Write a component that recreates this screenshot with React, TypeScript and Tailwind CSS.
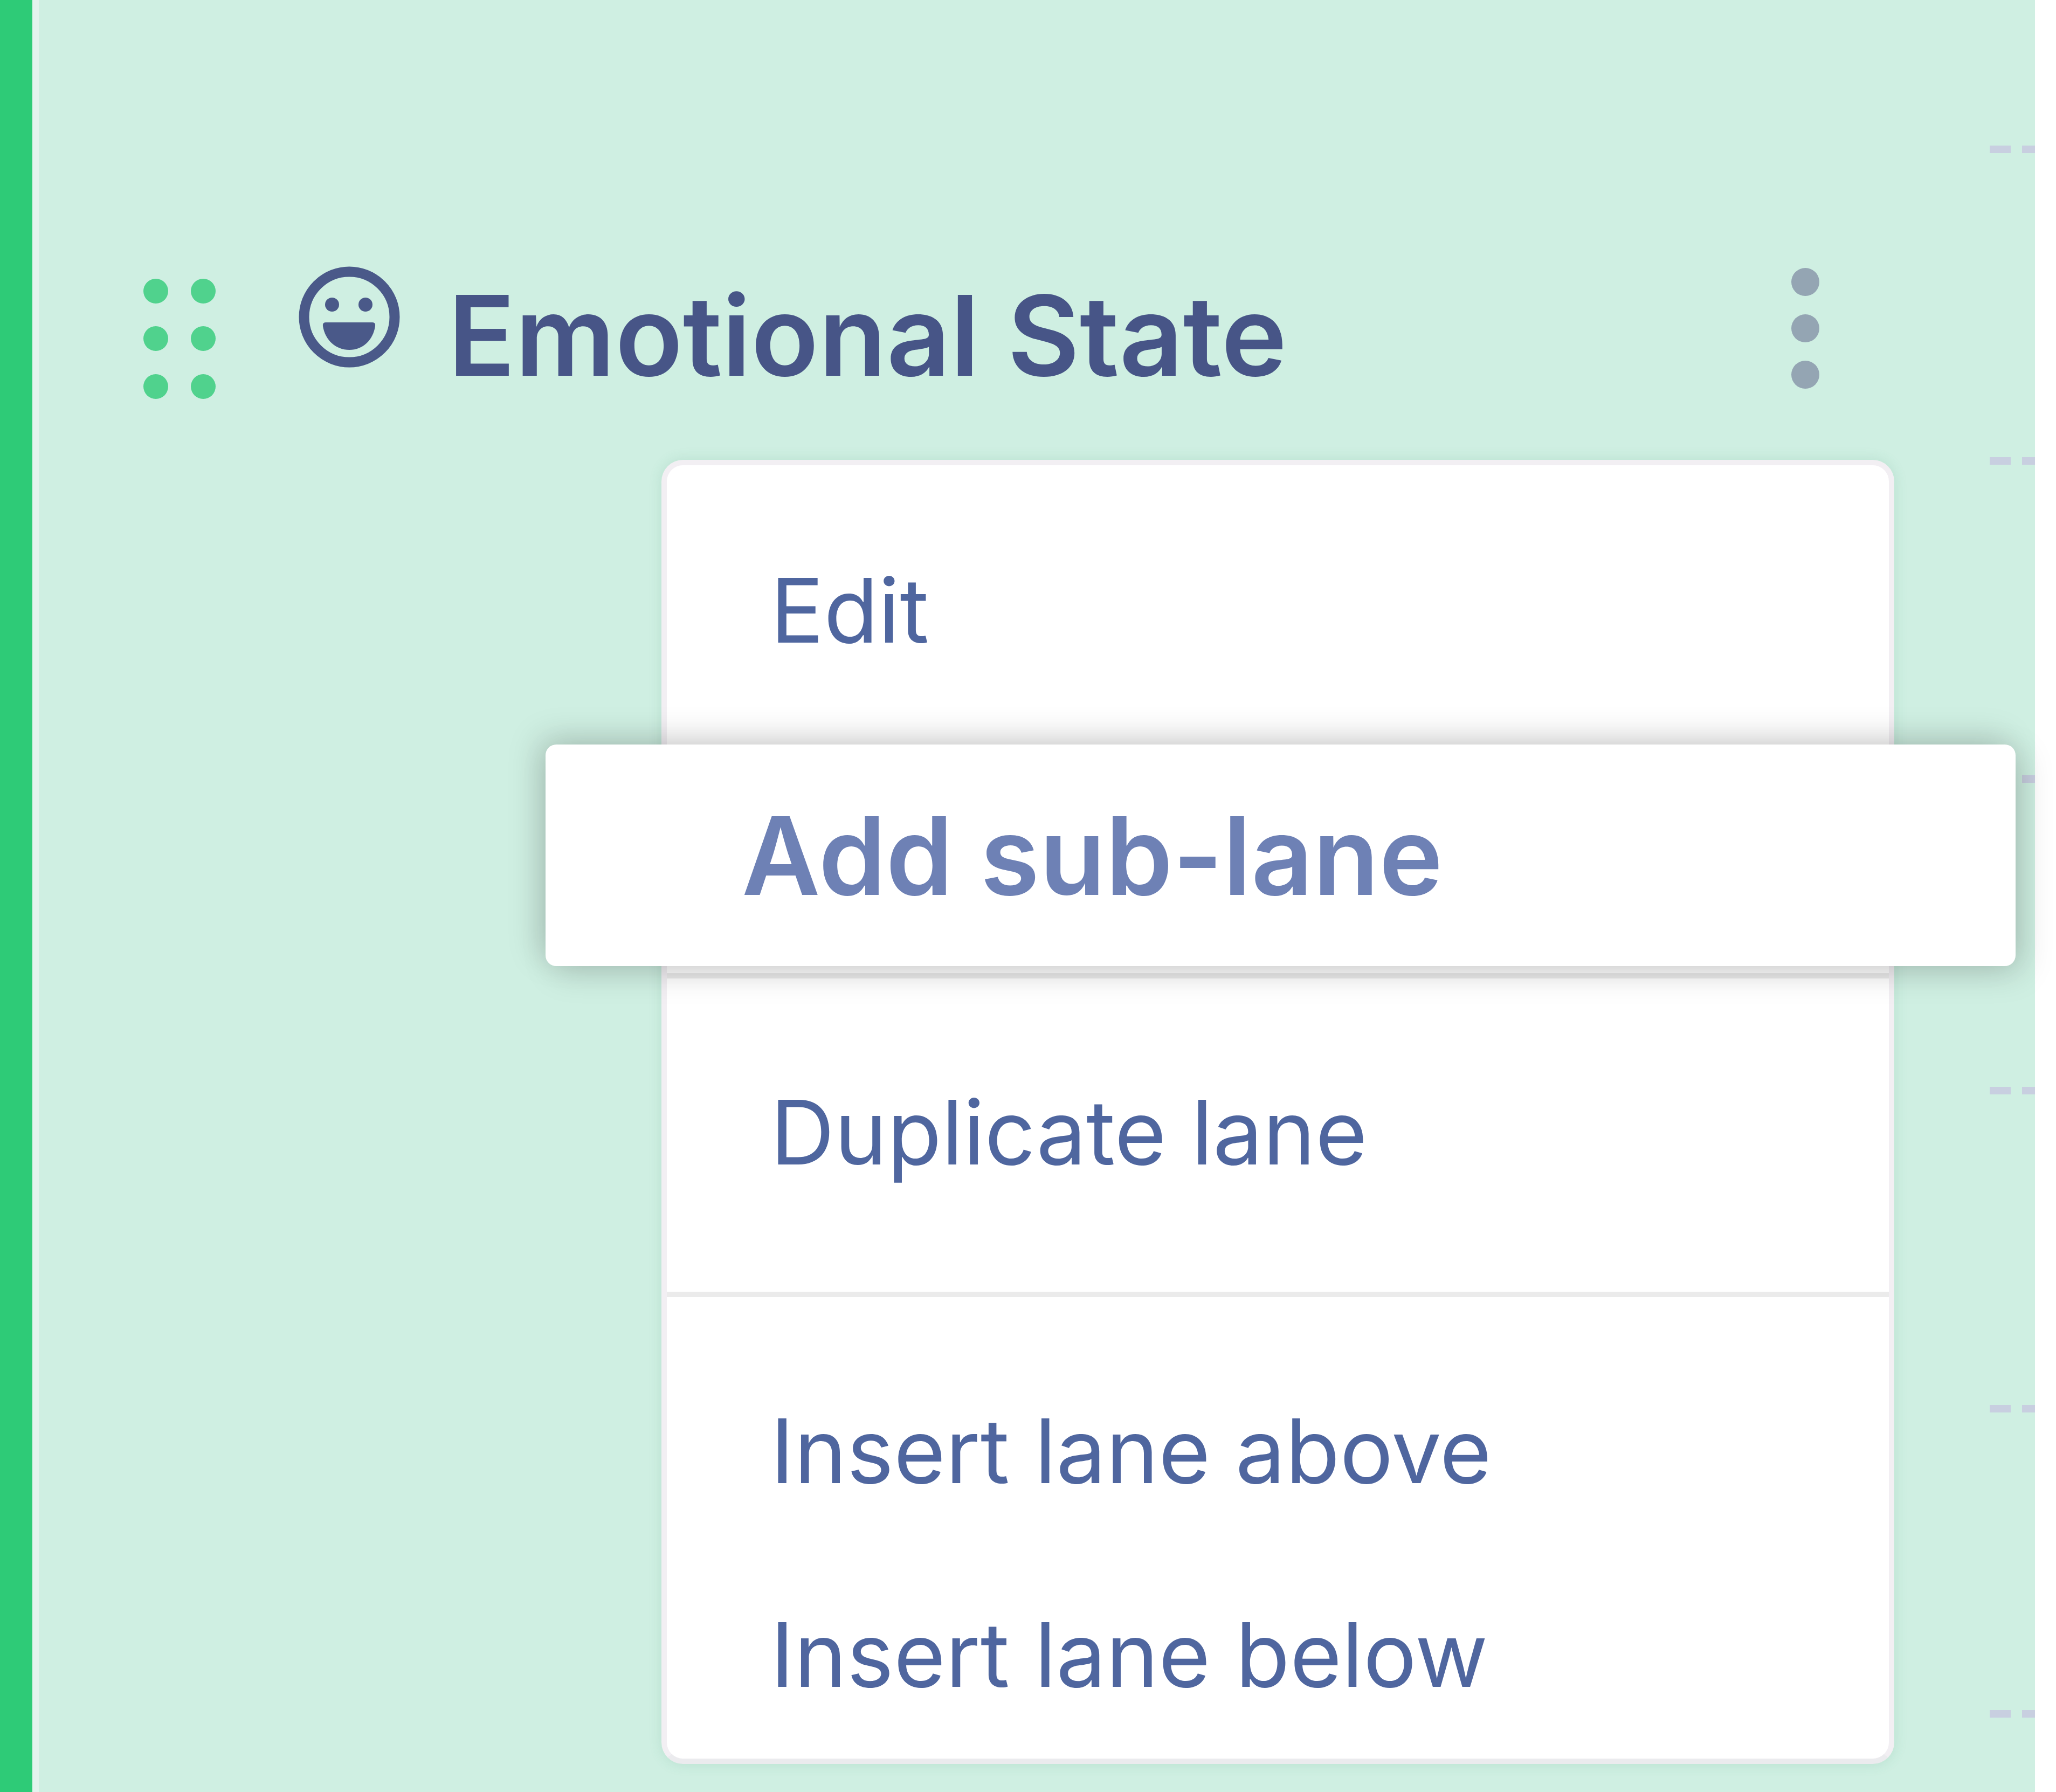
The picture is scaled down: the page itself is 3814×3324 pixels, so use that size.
const laneGaps = [
  "h-[270px]",
  "h-[564px]",
  "h-[576px]",
  "h-[564px]",
  "h-[576px]",
  "h-[552px]",
];

function DragHandle() {
  return (
    <button type="button" aria-label="Drag lane" className="shrink-0 text-[#50d28d]">
      <svg width="134" height="224" viewBox="0 0 134 224" fill="currentColor">
        {[23, 111].map((cx) =>
          [24, 112, 201].map((cy) => <circle key={`${cx}-${cy}`} cx={cx} cy={cy} r="23" />)
        )}
      </svg>
    </button>
  );
}

function SmileIcon() {
  return (
    <svg
      width="190"
      height="190"
      viewBox="0 0 190 190"
      className="shrink-0 self-start text-[#4a5989]"
      aria-hidden="true"
    >
      <circle cx="94" cy="95" r="84" fill="none" stroke="currentColor" strokeWidth="19" />
      <circle cx="62" cy="72" r="13" fill="currentColor" />
      <circle cx="124" cy="72" r="13" fill="currentColor" />
      <path
        d="M50 105H137Q143 105 142 112C138 138 119 156 94 156S49 138 45 112Q44 105 50 105Z"
        fill="currentColor"
      />
    </svg>
  );
}

function MoreButton() {
  return (
    <button type="button" aria-label="Lane options" className="shrink-0 self-start text-[#94a5b3]">
      <svg width="52" height="230" viewBox="0 0 52 230" fill="currentColor">
        <circle cx="26" cy="30" r="26" />
        <circle cx="26" cy="116" r="26" />
        <circle cx="26" cy="202" r="26" />
      </svg>
    </button>
  );
}

function MenuItem({ label }: { label: string }) {
  return (
    <li>
      <button
        type="button"
        className="block h-[378px] w-full pl-[192px] text-left text-[165px] leading-[378px] text-[#4f669f]"
      >
        {label}
      </button>
    </li>
  );
}

function LaneMenu() {
  return (
    <div className="mt-[90px] mr-[177px] ml-auto w-[2287px] rounded-[40px] border-[10px] border-[#f2eff3] border-b-[#ebebee] bg-white shadow-[0_0_24px_rgba(60,150,110,0.16)]">
      <ul className="pt-20 pb-[106px]">
        <MenuItem label="Edit" />
        <li className="relative h-[378px]">
          <button
            type="button"
            className="absolute top-[60px] -right-[235px] -left-[225px] z-10 h-[411px] rounded-[20px] bg-white pl-[364px] text-left text-[200px] font-semibold text-[#6e81b5] shadow-[14px_14px_60px_rgba(0,0,0,0.15),-14px_-14px_60px_rgba(0,0,0,0.15)]"
          >
            Add sub-lane
          </button>
        </li>
      </ul>
      <ul className="border-t-[10px] border-[#ebebeb] pt-24 pb-[107px]">
        <MenuItem label="Duplicate lane" />
      </ul>
      <ul className="border-t-[10px] border-[#ebebeb] pt-24 pb-1">
        <MenuItem label="Insert lane above" />
        <MenuItem label="Insert lane below" />
      </ul>
    </div>
  );
}

export default function App() {
  return (
    <div className="flex min-h-screen w-full overflow-hidden bg-white pr-[39px] font-['Inter',sans-serif]">
      <div className="w-[60px] shrink-0 bg-[#2ecb77]" />
      <div className="w-3 shrink-0 bg-[#e3f3ee]" />
      <main className="relative z-10 min-w-0 flex-1 bg-[#cfefe2] pt-[493px]">
        <header className="flex h-[270px] items-center pr-[400px] pl-[194px]">
          <DragHandle />
          <div className="ml-[154px] flex h-full flex-1 items-center gap-[87px]">
            <SmileIcon />
            <h1 className="whitespace-nowrap pb-3 text-[206px] font-semibold text-[#475587]">
              Emotional State
            </h1>
          </div>
          <MoreButton />
        </header>
        <div className="relative pr-[84px]">
          <LaneMenu />
        </div>
        <div className="absolute inset-y-0 right-0 -z-10 w-[84px]" aria-hidden="true">
          {laneGaps.map((gap, i) => (
            <div key={i}>
              <div className={gap} />
              <div className="h-[14px] bg-[repeating-linear-gradient(90deg,#c8cfe0_0_39px,transparent_39px_60px)]" />
            </div>
          ))}
        </div>
      </main>
    </div>
  );
}
